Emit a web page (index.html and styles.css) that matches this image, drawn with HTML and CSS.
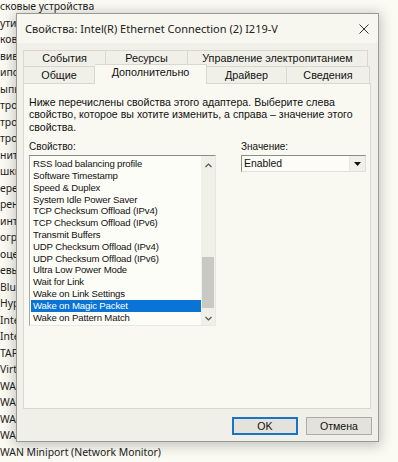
FILE: index.html
```html
<html>
<head>
    <meta charset="utf-8">
    <link rel="stylesheet" href="styles.css">
</head>
<body>
    <div class="desk">
        <div class="line">сковые устройства</div>
        <div class="line">утис</div>
        <div class="line">ков</div>
        <div class="line">вив</div>
        <div class="line">ипо</div>
        <div class="line">ыпь</div>
        <div class="line">тро</div>
        <div class="line">тро</div>
        <div class="line">тро</div>
        <div class="line">нит</div>
        <div class="line">шки</div>
        <div class="line">ере</div>
        <div class="line">рен</div>
        <div class="line">инт</div>
        <div class="line">огр</div>
        <div class="line">оце</div>
        <div class="line">евь</div>
        <div class="line">Blu</div>
        <div class="line">Hyp</div>
        <div class="line">Inte</div>
        <div class="line">Inte</div>
        <div class="line">TAP</div>
        <div class="line">Virt</div>
        <div class="line">WAN</div>
        <div class="line">WAN</div>
        <div class="line">WAN</div>
        <div class="line">WAN</div>
        <div class="line">WAN Miniport (Network Monitor)</div>
    </div>

    <div class="dialog">
        <div class="titlebar">
            <span class="title">Свойства: Intel(R) Ethernet Connection (2) I219-V</span>
            <svg class="close" width="10" height="10" viewBox="0 0 10 10">
                <path d="M0.5 0.5 L9.5 9.5 M9.5 0.5 L0.5 9.5" stroke="#333" stroke-width="1" fill="none"/>
            </svg>
        </div>

        <div class="tabs">
            <div class="tabrow">
                <div class="tab w83">События</div>
                <div class="tab w82">Ресурсы</div>
                <div class="tab w180">Управление электропитанием</div>
            </div>
            <div class="tabrow front">
                <div class="tab w72">Общие</div>
                <div class="tab w112 active">Дополнительно</div>
                <div class="tab w80">Драйвер</div>
                <div class="tab w83">Сведения</div>
            </div>
        </div>

        <div class="panel">
            <p class="desc">Ниже перечислены свойства этого адаптера. Выберите слева<br>
                свойство, которое вы хотите изменить, а справа – значение этого<br>
                свойства.</p>
            <div class="fields">
                <div>
                    <label>Свойство:</label>
                    <div class="listbox">
                        <div class="items">
                            <div class="item">RSS load balancing profile</div>
                            <div class="item">Software Timestamp</div>
                            <div class="item">Speed &amp; Duplex</div>
                            <div class="item">System Idle Power Saver</div>
                            <div class="item">TCP Checksum Offload (IPv4)</div>
                            <div class="item">TCP Checksum Offload (IPv6)</div>
                            <div class="item">Transmit Buffers</div>
                            <div class="item">UDP Checksum Offload (IPv4)</div>
                            <div class="item">UDP Checksum Offload (IPv6)</div>
                            <div class="item">Ultra Low Power Mode</div>
                            <div class="item">Wait for Link</div>
                            <div class="item">Wake on Link Settings</div>
                            <div class="item selected">Wake on Magic Packet</div>
                            <div class="item">Wake on Pattern Match</div>
                        </div>
                        <div class="scrollbar">
                            <svg width="7" height="5" viewBox="0 0 7 5"><path d="M0.5 4 L3.5 1 L6.5 4" stroke="#555" stroke-width="1.2" fill="none"/></svg>
                            <div class="track"><div class="thumb"></div></div>
                            <svg width="7" height="5" viewBox="0 0 7 5"><path d="M0.5 1 L3.5 4 L6.5 1" stroke="#555" stroke-width="1.2" fill="none"/></svg>
                        </div>
                    </div>
                </div>
                <div>
                    <label>Значение:</label>
                    <div class="combo">
                        <span>Enabled</span>
                        <div class="drop">
                            <svg width="7" height="4" viewBox="0 0 7 4"><path d="M0 0 L7 0 L3.5 4 Z" fill="#111"/></svg>
                        </div>
                    </div>
                </div>
            </div>
        </div>

        <div class="buttons">
            <div class="button default">OK</div>
            <div class="button">Отмена</div>
        </div>
    </div>
</body>
</html>
```

FILE: styles.css
```css
body{
    margin: 0;
    background: #fbfbf4;
    font-family: "Noto Sans", sans-serif;
    width: 398px;
    height: 462px;
    overflow: hidden;
    position: relative;
}

.desk{
    font-size: 10.4px;
    color: #222;
    margin-top: -2px;
}

.line{
    height: 16.5px;
    line-height: 16.5px;
    white-space: nowrap;
}

.dialog{
    position: absolute;
    left: 16px;
    top: 13px;
    width: 361px;
    height: 427px;
    background: #f0f0e8;
    border: 1px solid #9a9a94;
    box-shadow: 0 2px 12px 2px rgb(0 0 0 / 22%);
    font-family: "Liberation Sans", Arial, sans-serif;
    font-size: 10px;
    color: #111;
}

.titlebar{
    height: 29px;
    display: flex;
    align-items: center;
    justify-content: space-between;
    padding: 0 9px 0 8px;
    background: #f7f7ef;
}

.title{
    font-family: "Noto Sans", sans-serif;
    font-size: 11px;
    color: #222;
}

.tabs{
    padding: 7px 0 0 6px;
    font-size: 10.8px;
}

.tabrow{
    display: flex;
    height: 16px;
}

.tab{
    box-sizing: border-box;
    border: 1px solid #d8d8d0;
    border-bottom: none;
    background: #f0f0e8;
    text-align: center;
    line-height: 15px;
    white-space: nowrap;
}

.tabrow .tab + .tab{
    border-left: none;
}

.front{
    height: 17px;
    position: relative;
    z-index: 1;
}

.front .tab{
    line-height: 16px;
}

.tab.active{
    background: #f9f9f1;
    margin-top: -2px;
    height: 20px;
    border-left: 1px solid #d8d8d0;
    border-right: 1px solid #d8d8d0;
    line-height: 15px;
}

.w83{ width: 83px; }
.w82{ width: 82px; }
.w180{ width: 180px; }
.w72{ width: 72px; }
.w112{ width: 112px; }
.w80{ width: 80px; }

.panel{
    margin-left: 6px;
    width: 348px;
    height: 326px;
    box-sizing: border-box;
    border: 1px solid #d8d8d0;
    background: #f9f9f1;
    padding: 12px 4px 0 5px;
}

.desc{
    margin: 0;
    font-size: 10.6px;
    line-height: 12.4px;
    white-space: nowrap;
}

.fields{
    display: grid;
    grid-template-columns: 187px 125px;
    column-gap: 25px;
    margin-top: 7px;
}

label{
    display: block;
    height: 13px;
    line-height: 13px;
    margin-bottom: 2px;
}

.listbox{
    display: flex;
    height: 171px;
    box-sizing: border-box;
    border-top: 1px solid #8c8c86;
    border-left: 1px solid #a8a8a2;
    border-right: 1px solid #e8e8e0;
    border-bottom: 1px solid #e8e8e0;
    background: #fdfdf7;
}

.items{
    flex: 1;
    padding: 2px 0 0 1px;
}

.item{
    height: 11.8px;
    line-height: 11.8px;
    padding-left: 2px;
    font-size: 9.6px;
    letter-spacing: -0.15px;
    white-space: nowrap;
}

.item.selected{
    background: #0a74d6;
    color: #fff;
}

.scrollbar{
    width: 14px;
    background: #f0f0e8;
    display: flex;
    flex-direction: column;
    align-items: center;
    padding: 7px 0 4px;
    box-sizing: border-box;
}

.track{
    flex: 1;
    width: 100%;
    display: flex;
    flex-direction: column;
    justify-content: flex-end;
    padding: 0 1px 8px;
    box-sizing: border-box;
}

.thumb{
    height: 51px;
    background: #c9c9c3;
}

.combo{
    display: flex;
    height: 17px;
    margin-top: 2px;
    box-sizing: border-box;
    border-top: 1px solid #8c8c86;
    border-left: 1px solid #8c8c86;
    border-right: 1px solid #e0e0d8;
    border-bottom: 1px solid #e0e0d8;
    background: #fdfdf7;
}

.combo span{
    flex: 1;
    line-height: 15px;
    padding-left: 2px;
    font-size: 10.4px;
}

.drop{
    width: 15px;
    background: #f0f0e8;
    border-left: 1px solid #e8e8e0;
    display: flex;
    align-items: center;
    justify-content: center;
}

.buttons{
    display: flex;
    justify-content: flex-end;
    gap: 8px;
    padding: 8px 6px 0 0;
    font-size: 10.6px;
}

.button{
    width: 66px;
    height: 18px;
    box-sizing: border-box;
    border: 1px solid #adada7;
    background: #e3e3dc;
    text-align: center;
    line-height: 16px;
}

.button.default{
    border: 2px solid #1a73c9;
    line-height: 14px;
}
```
